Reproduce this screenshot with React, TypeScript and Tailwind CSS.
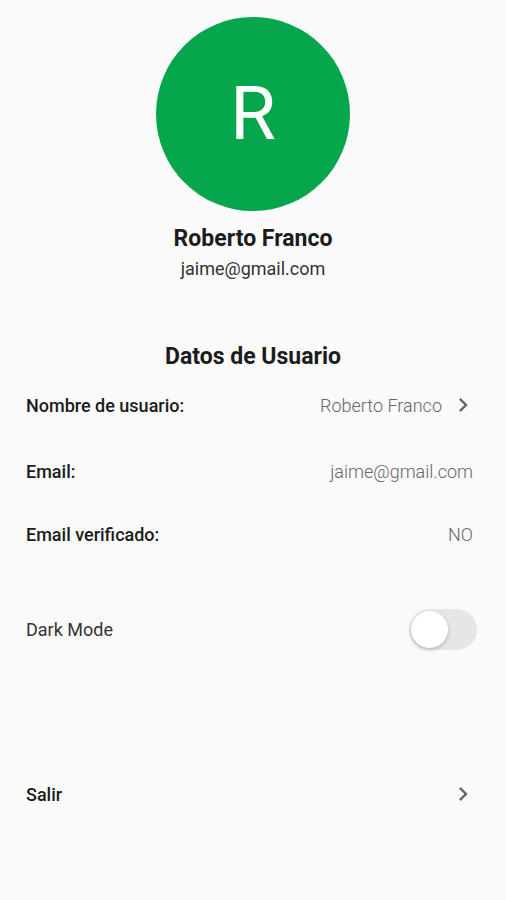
import React from "react";

function ChevronRight() {
  return (
    <svg viewBox="0 0 24 24" className="h-7 w-7 fill-[#666666]">
      <path d="M10 6L8.59 7.41 13.17 12l-4.58 4.59L10 18l6-6z" />
    </svg>
  );
}

function InfoRow({ label, value, chevron }: { label: string; value: string; chevron?: boolean }) {
  return (
    <div className="flex h-[48px] items-center justify-between">
      <span className="text-[18px] font-medium text-[#1c1c1c]">{label}</span>
      <div className="flex items-center">
        <span className="text-[18px] font-light text-[#666666]">{value}</span>
        {chevron && (
          <span className="ml-[7px] -mr-[4px]">
            <ChevronRight />
          </span>
        )}
      </div>
    </div>
  );
}

export default function App() {
  return (
    <div className="min-h-screen bg-[#fafafa] font-['Roboto',sans-serif] text-[#1c1c1c]">
      <div className="flex flex-col items-center pt-[17px]">
        <div className="flex h-[194px] w-[194px] items-center justify-center rounded-full bg-[#05a64c]">
          <span className="text-[74px] font-normal leading-none text-white">R</span>
        </div>
        <h1 className="mt-[14px] text-[23px] font-bold leading-[28px]">Roberto Franco</h1>
        <p className="mt-[5px] text-[18px] leading-[22px] text-[#333333]">jaime@gmail.com</p>
        <h2 className="mt-[63px] text-[23px] font-bold leading-[28px]">Datos de Usuario</h2>
      </div>

      <div className="px-[26px] pr-[33px]">
        <div className="mt-[10px]">
          <InfoRow label="Nombre de usuario:" value="Roberto Franco" chevron />
        </div>
        <div className="mt-[18px]">
          <InfoRow label="Email:" value="jaime@gmail.com" />
        </div>
        <div className="mt-[15px]">
          <InfoRow label="Email verificado:" value="NO" />
        </div>

        <div className="mt-[47px] flex h-[48px] items-center justify-between">
          <span className="text-[18px] text-[#333333]">Dark Mode</span>
          <div className="relative -mr-[4px] h-[41px] w-[68px] rounded-full bg-[#e6e6e6]">
            <div className="absolute left-[2px] top-[2px] h-[37px] w-[37px] rounded-full bg-white shadow-[0_2px_4px_rgba(0,0,0,0.2)]" />
          </div>
        </div>

        <div className="mt-[117px] flex h-[48px] items-center justify-between">
          <span className="text-[18px] font-medium text-[#1c1c1c]">Salir</span>
          <span className="-mr-[4px]">
            <ChevronRight />
          </span>
        </div>
      </div>
    </div>
  );
}
